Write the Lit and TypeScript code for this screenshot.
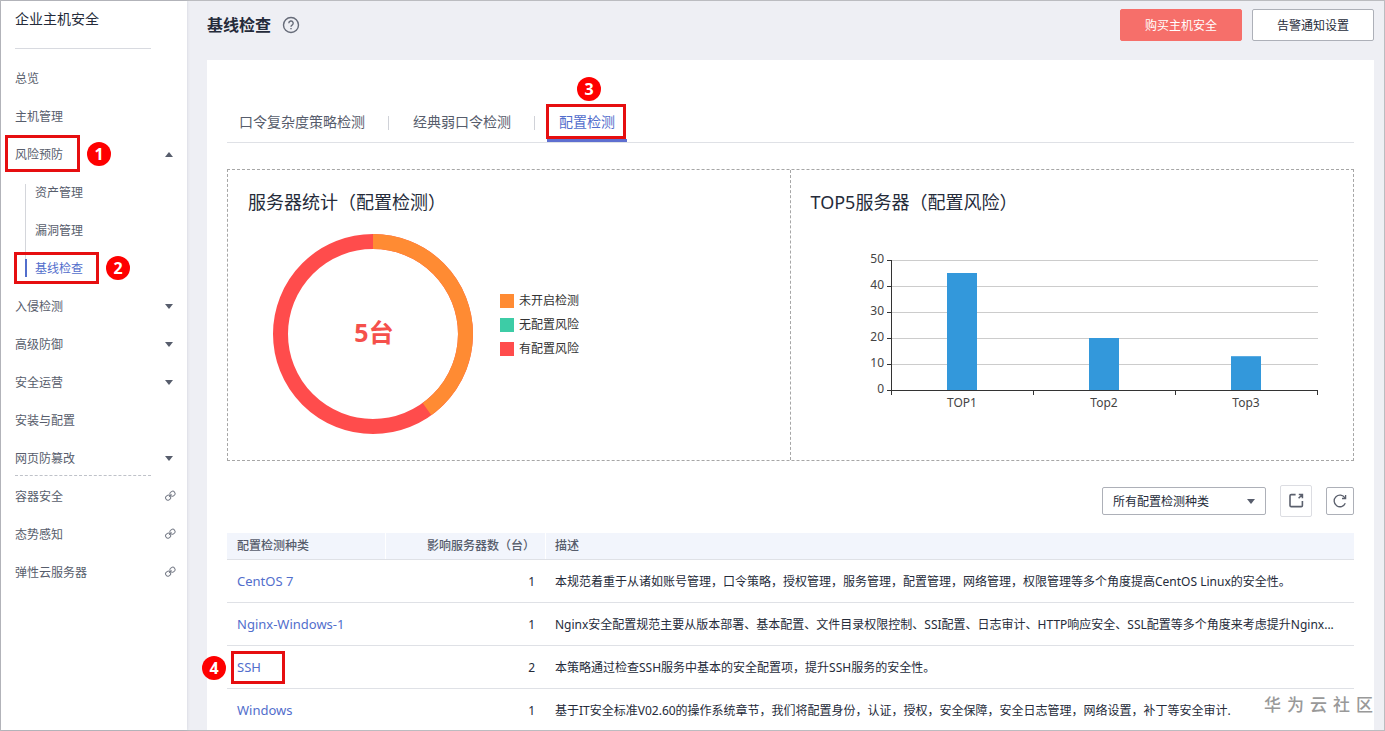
import { LitElement, html, svg, css, nothing } from "lit";
import { customElement, property, state } from "lit/decorators.js";
import { classMap } from "lit/directives/class-map.js";

interface NavItem {
  label: string;
  kind?: "open" | "closed" | "link";
  step?: number;
  divider?: boolean;
  children?: { label: string; active?: boolean; step?: number }[];
}

const NAV: NavItem[] = [
  { label: "总览" },
  { label: "主机管理" },
  {
    label: "风险预防",
    kind: "open",
    step: 1,
    children: [
      { label: "资产管理" },
      { label: "漏洞管理" },
      { label: "基线检查", active: true, step: 2 },
    ],
  },
  { label: "入侵检测", kind: "closed" },
  { label: "高级防御", kind: "closed" },
  { label: "安全运营", kind: "closed" },
  { label: "安装与配置" },
  { label: "网页防篡改", kind: "closed", divider: true },
  { label: "容器安全", kind: "link" },
  { label: "态势感知", kind: "link" },
  { label: "弹性云服务器", kind: "link" },
];

const TABS = ["口令复杂度策略检测", "经典弱口令检测", "配置检测"];

const ROWS = [
  { name: "CentOS 7", count: 1, text: "本规范着重于从诸如账号管理，口令策略，授权管理，服务管理，配置管理，网络管理，权限管理等多个角度提高CentOS Linux的安全性。" },
  { name: "Nginx-Windows-1", count: 1, text: "Nginx安全配置规范主要从版本部署、基本配置、文件目录权限控制、SSI配置、日志审计、HTTP响应安全、SSL配置等多个角度来考虑提升Nginx..." },
  { name: "SSH", count: 2, step: 4, text: "本策略通过检查SSH服务中基本的安全配置项，提升SSH服务的安全性。" },
  { name: "Windows", count: 1, text: "基于IT安全标准V02.60的操作系统章节，我们将配置身份，认证，授权，安全保障，安全日志管理，网络设置，补丁等安全审计." },
];

const base = css`
  * { box-sizing: border-box; }
  a { color: inherit; text-decoration: none; }
  button, select { font: inherit; cursor: pointer; }
`;

const caret = (up: boolean) => html`<svg class="caret" width="8" height="5" viewBox="0 0 8 5" aria-hidden="true">
  <path d=${up ? "M0 5L4 0L8 5Z" : "M0 0H8L4 5Z"} fill="#575d6c" />
</svg>`;

/* Red frame with a numbered badge, laid over the control it points at. */
@customElement("step-mark")
class StepMark extends LitElement {
  @property({ type: Number }) step = 1;
  static styles = css`
    :host { position: absolute; border: 3px solid #e60e10; pointer-events: none; box-sizing: border-box; }
    .badge {
      position: absolute;
      width: 24px;
      height: 24px;
      border-radius: 50%;
      background: #fe0000;
      color: #fff;
      font: bold 16px/24px "Open Sans", sans-serif;
      text-align: center;
    }
    .side { left: calc(100% + 10px); top: calc(50% - 12px); }
    .above { left: calc(50% - 9px); bottom: calc(100% + 6px); }
    .before { right: calc(100% + 8px); top: calc(50% - 12px); }
  `;
  render() {
    const place = this.step === 3 ? "above" : this.step === 4 ? "before" : "side";
    return html`<span class="badge ${place}">${this.step}</span>`;
  }
}

@customElement("side-nav")
class SideNav extends LitElement {
  static styles = [base, css`
    :host { display: block; background: #fff; box-shadow: 0 0 3px rgba(40, 50, 80, 0.15); color: #575d6c; }
    .title { margin: 0 36px 10px 14px; font-size: 14px; font-weight: 400; line-height: 36px; height: 48px; color: #252b3a; border-bottom: 1px solid #d8dae0; }
    ul { list-style: none; margin: 0; padding: 0; }
    .row { display: flex; align-items: center; justify-content: space-between; height: 38px; padding: 0 14px; }
    .label { position: relative; padding-top: 2px; }
    .caret { display: block; }
    .chain { display: block; margin-right: -3px; }
    .wrap { position: relative; }
    .wrap.dash::after {
      content: "";
      position: absolute;
      left: 14px;
      right: 36px;
      bottom: 1px;
      border-top: 1px dashed #bfc2c9;
    }
    .sub .row { padding-left: 34px; }
    .sub { background: linear-gradient(#d4d6db, #d4d6db) 24px 11px / 1px 76px no-repeat; }
    .sub .on { color: #526ecc; background: linear-gradient(#526ecc, #526ecc) 24px 10px / 2px 18px no-repeat; }
    step-mark.s1 { inset: -9px -17px -8px -10px; }
    step-mark.s2 { inset: -6px -16px -6px -21px; }
  `];
  render() {
    const mark = (n?: number) => (n ? html`<step-mark class="s${n}" .step=${n}></step-mark>` : nothing);
    return html`
      <h2 class="title">企业主机安全</h2>
      <nav aria-label="企业主机安全">
        <ul>
          ${NAV.map((item) => html`
            <li>
              <div class=${classMap({ wrap: true, dash: !!item.divider })}>
                <a class="row" href="#">
                  <span class="label">${item.label}${mark(item.step)}</span>
                  ${item.kind === "link"
                    ? html`<svg class="chain" width="12" height="12" viewBox="0 0 12 12" fill="none" stroke="#777c88" aria-hidden="true">
                        <rect x="6" y="1.4" width="5" height="4.6" rx="2.1" transform="rotate(-35 8.5 3.7)" />
                        <rect x="1.6" y="5.4" width="5" height="4.6" rx="2.1" transform="rotate(-35 4.1 7.7)" />
                        <path d="M4.9 7L7.6 4.4" />
                      </svg>`
                    : item.kind ? caret(item.kind === "open") : nothing}
                </a>
              </div>
              ${item.children
                ? html`<ul class="sub">
                    ${item.children.map((c) => html`<li>
                      <a class=${classMap({ row: true, on: !!c.active })} href="#"><span class="label">${c.label}${mark(c.step)}</span></a>
                    </li>`)}
                  </ul>`
                : nothing}
            </li>`)}
        </ul>
      </nav>`;
  }
}

@customElement("server-donut")
class ServerDonut extends LitElement {
  static styles = [base, css`
    :host { display: flex; align-items: center; gap: 27px; }
    svg { display: block; flex: none; }
    .total { font-size: 25px; font-weight: 700; fill: #f5504b; text-anchor: middle; }
    ul { list-style: none; margin: 0 0 18px; padding: 0; color: #333; }
    li { display: flex; align-items: center; gap: 5px; line-height: 24px; }
    .key { width: 14px; height: 14px; }
    .off { background: #ff8b33; }
    .safe { background: #3dcca6; }
    .risk { background: #ff4c4c; }
  `];
  render() {
    const ring = 2 * Math.PI * 92.5;
    return html`
      <svg width="200" height="200" viewBox="0 0 200 200" role="img" aria-label="5台">
        <g fill="none" stroke-width="15" transform="rotate(-90 100 100)">
          <circle cx="100" cy="100" r="92.5" stroke="#ff4c4c" />
          <circle cx="100" cy="100" r="92.5" stroke="#ff8b33" stroke-dasharray="${ring * 0.4} ${ring}" />
        </g>
        <text class="total" x="101" y="108">5台</text>
      </svg>
      <ul>
        <li><span class="key off"></span>未开启检测</li>
        <li><span class="key safe"></span>无配置风险</li>
        <li><span class="key risk"></span>有配置风险</li>
      </ul>`;
  }
}

@customElement("risk-bars")
class RiskBars extends LitElement {
  static styles = css`
    :host { display: block; }
    svg { display: block; max-width: 100%; }
    text { font-size: 12px; fill: #444; }
    .y { text-anchor: end; }
    .x { text-anchor: middle; }
    .grid { stroke: #ccc; }
    .axis { stroke: #333; }
    .bar { fill: #3398db; }
  `;
  render() {
    const data = [["TOP1", 45], ["Top2", 20], ["Top3", 13]] as const;
    const y = (v: number) => 140 - v * 2.6;
    return html`<svg width="468" height="170" viewBox="0 0 468 170" role="img" aria-label="TOP5服务器">
      ${[0, 10, 20, 30, 40, 50].map((v) => svg`
        <path class="grid" d="M31 ${y(v) + 0.5}H457" />
        <path class="axis" d="M26 ${y(v) + 0.5}H31" />
        <text class="y" x="23" y=${y(v) + 3}>${v}</text>`)}
      ${data.map(([name, v], i) => svg`
        <rect class="bar" x=${86 + i * 142} y=${y(v)} width="30" height=${v * 2.6} />
        <text class="x" x=${101 + i * 142} y="157">${name}</text>`)}
      <path class="axis" fill="none" d="M30.5 10V145M26 140.5H457M172.5 140V145M314.5 140V145M456.5 140V145" />
    </svg>`;
  }
}

@customElement("app-root")
class AppRoot extends LitElement {
  @state() tab = 2;

  static styles = [base, css`
    :host {
      display: grid;
      grid-template-columns: 186px minmax(0, 1fr);
      box-sizing: border-box;
      min-height: 100vh;
      border: 1px solid #bbbcc0;
      background: #eeeff4;
      color: #252b3a;
      font: 12px/18px "Noto Sans", "Noto Sans CJK SC", sans-serif;
    }
    main { display: flex; flex-direction: column; padding: 0 10px 0 20px; }
    header { display: flex; align-items: center; gap: 10px; padding: 8px 0 19px; }
    h1 { margin: 0; font-size: 16px; line-height: 32px; font-weight: 700; }
    .help { display: flex; margin-right: auto; padding: 0; border: 0; background: none; }
    .btn { width: 122px; height: 32px; border-radius: 2px; border: 1px solid #adb0b8; background: #fff; color: #252b3a; padding: 2px 0 0; }
    .btn.buy { background: #f66f6a; border-color: #f66f6a; color: #fff; }
    .panel { position: relative; flex: 1; background: #fff; padding: 42px 20px 0; }
    .tabs { display: flex; gap: 24px; border-bottom: 1px solid #dfe1e6; }
    .tab { position: relative; height: 40px; padding: 0 12px; border: 0; background: none; font-size: 14px; line-height: 40px; color: #575d6c; }
    .tab + .tab::before { content: ""; position: absolute; left: -13px; top: 14px; height: 14px; border-left: 1px solid #d0d2d8; }
    .tab.on { color: #526ecc; box-shadow: inset 0 -3px #5e6fd0; }
    .stats { display: grid; grid-template-columns: 1fr 1fr; margin-top: 26px; border: 1px dashed #a6a6a6; }
    .card { height: 290px; padding: 20px 20px 0; }
    .card:first-child { border-right: 1px dashed #a6a6a6; }
    h3 { margin: 0 0 20px; font-size: 18px; line-height: 24px; font-weight: 400; }
    server-donut { padding-left: 25px; }
    risk-bars { padding: 16px 0 0 50px; }
    .tools { display: flex; justify-content: flex-end; align-items: center; gap: 14px; margin: 24px 0 16px; }
    .pick { position: relative; display: flex; align-items: center; }
    select { appearance: none; width: 164px; height: 28px; padding: 2px 28px 0 10px; border: 1px solid #adb0b8; border-radius: 2px; background: #fff; color: #252b3a; }
    .pick .caret { position: absolute; right: 11px; pointer-events: none; }
    .icon { display: grid; place-items: center; width: 28px; height: 28px; padding: 0; border: 1px solid #adb0b8; border-radius: 2px; background: #fff; }
    .icon.big { width: 32px; height: 32px; border-color: #dcdde2; }
    table { width: 100%; table-layout: fixed; border-collapse: separate; border-spacing: 0; }
    .c1 { width: 158px; }
    .c2 { width: 160px; }
    th { height: 27px; padding: 0 10px; background: #f2f5fc; color: #575d6c; font-weight: 500; text-align: left; border-bottom: 1px solid #dfe1e6; }
    th + th { box-shadow: inset 1px 0 #fff; }
    td { height: 43px; padding: 2px 10px 0; border-bottom: 1px solid #dfe1e6; white-space: nowrap; }
    tr:last-child td { height: 41px; border-bottom: 0; }
    .num { text-align: right; }
    td.name { color: #526ecc; font-size: 13px; padding-top: 0; }
    .name a { position: relative; }
    step-mark.s3 { inset: 2px 1px 3px -1px; }
    step-mark.s4 { inset: -7px -24px -8px -6px; }
    .watermark { position: absolute; right: 1px; bottom: 13px; display: flex; gap: 6px; font-size: 17px; line-height: 24px; font-weight: 500; color: #999; }
  `];

  render() {
    return html`
      <side-nav></side-nav>
      <main>
        <header>
          <h1>基线检查</h1>
          <button class="help" aria-label="帮助">
            <svg width="20" height="20" viewBox="0 0 20 20" fill="none" stroke="#666b78" stroke-width="1.4">
              <circle cx="10" cy="10" r="7.5" />
              <path d="M7.8 8.2a2.2 2.2 0 1 1 3.3 1.9c-.8.5-1.1.8-1.1 1.7M10 12.9v1.4" />
            </svg>
          </button>
          <button class="btn buy">购买主机安全</button>
          <button class="btn">告警通知设置</button>
        </header>
        <section class="panel">
          <div class="tabs" role="tablist">
            ${TABS.map((t, i) => html`<button
              role="tab"
              aria-selected=${i === this.tab ? "true" : "false"}
              class=${classMap({ tab: true, on: i === this.tab })}
              @click=${() => (this.tab = i)}
            >${t}${i === 2 ? html`<step-mark class="s3" .step=${3}></step-mark>` : nothing}</button>`)}
          </div>
          <div class="stats">
            <section class="card">
              <h3>服务器统计（配置检测）</h3>
              <server-donut></server-donut>
            </section>
            <section class="card">
              <h3>TOP5服务器（配置风险）</h3>
              <risk-bars></risk-bars>
            </section>
          </div>
          <div class="tools">
            <div class="pick">
              <select aria-label="配置检测种类"><option>所有配置检测种类</option></select>
              ${caret(false)}
            </div>
            <button class="icon big" aria-label="导出">
              <svg width="16" height="16" viewBox="0 0 16 16" fill="none" stroke="#5b606d" stroke-width="1.6">
                <path d="M7.6 1.6H3.2Q2 1.6 2 2.8V12.4Q2 13.6 3.2 13.6H13.2Q14.4 13.6 14.4 12.4V8" />
                <path d="M10.8 1.5H14.4V5.2M14.2 1.7L10.6 5.3" />
              </svg>
            </button>
            <button class="icon" aria-label="刷新">
              <svg width="16" height="16" viewBox="0 0 16 16" fill="none" stroke="#5b606d" stroke-width="1.3">
                <path d="M13.3 10.2A5.8 5.8 0 1 1 12.9 4.9" />
                <path d="M13.6 2V5.5H10" />
              </svg>
            </button>
          </div>
          <table>
            <thead>
              <tr><th class="c1">配置检测种类</th><th class="c2 num">影响服务器数（台）</th><th>描述</th></tr>
            </thead>
            <tbody>
              ${ROWS.map((r) => html`<tr>
                <td class="name"><a href="#">${r.name}${r.step ? html`<step-mark class="s4" .step=${r.step}></step-mark>` : nothing}</a></td>
                <td class="num">${r.count}</td>
                <td>${r.text}</td>
              </tr>`)}
            </tbody>
          </table>
          <div class="watermark"><span>华</span> <span>为</span> <span>云</span> <span>社</span> <span>区</span></div>
        </section>
      </main>`;
  }
}
